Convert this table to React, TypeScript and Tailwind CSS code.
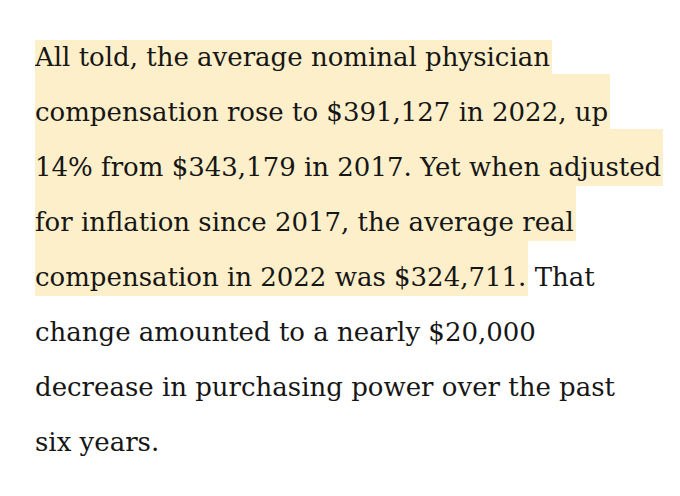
export default function App() {
  return (
    <div className="w-[680px] h-[496px] overflow-hidden bg-white">
      <div className="pt-[40px] pl-[35px]">
        {/* clip keeps the first highlighted line from running up past the block top */}
        <div className="overflow-hidden">
          <p className="-mt-[10px] text-[26px] leading-[55px] text-[#161616] font-['DejaVu_Serif',serif]">
            <span className="bg-[#fcefc9] pt-[23px] pb-[4px] px-[2px] -mx-[2px] box-decoration-clone">
              All told, the average nominal physician
              <br />
              compensation rose to $391,127 in 2022, up
              <br />
              14% from $343,179 in 2017. Yet when adjusted
              <br />
              for inflation since 2017, the average real
              <br />
              compensation in 2022 was $324,711.
            </span>{" "}
            That
            <br />
            change amounted to a nearly $20,000
            <br />
            decrease in purchasing power over the past
            <br />
            six years.
          </p>
        </div>
      </div>
    </div>
  );
}
